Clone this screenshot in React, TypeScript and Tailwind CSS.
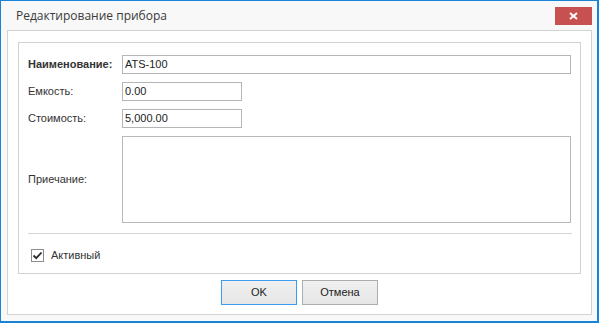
export default function App() {
  const label = "w-[94px] shrink-0 text-[11px] text-[#333]";
  const input =
    "h-[19px] border border-[#b5b5b5] bg-white px-[2px] flex items-center text-[11px] text-[#222]";

  return (
    <div
      className="w-[599px] h-[323px] bg-[#f8f8f8] border-l border-t border-r-2 border-b-2 border-[#1883d7] flex flex-col"
      style={{ fontFamily: "'Liberation Sans', Arial, sans-serif" }}
    >
      {/* Title bar */}
      <div className="h-[29px] shrink-0 flex items-start justify-between pl-[15px] pr-[5px]">
        <div
          className="pt-[6px] text-[12px] text-[#3a3a3a]"
          style={{ fontFamily: "'Open Sans', 'Noto Sans', sans-serif" }}
        >
          Редактирование прибора
        </div>
        <div className="mt-[6px] w-[37px] h-[18px] bg-[#c75050] flex items-center justify-center">
          <svg width="9" height="8" viewBox="0 0 9 8">
            <path d="M1 1 L8 7 M8 1 L1 7" stroke="#fff" strokeWidth="2" />
          </svg>
        </div>
      </div>

      {/* Content panel */}
      <div className="ml-[6px] mr-[5px] mb-[6px] flex-1 bg-white border border-[#d2d2d2] flex flex-col">
        <div className="mt-[11px] ml-[10px] w-[563px] h-[232px] border border-[#d2d2d2] pt-[12px] px-[9px] flex flex-col">
          <div className="flex items-center">
            <div className={label + " font-bold"}>Наименование:</div>
            <div className={input + " flex-1"}>ATS-100</div>
          </div>
          <div className="flex items-center mt-[8px]">
            <div className={label}>Емкость:</div>
            <div className={input + " w-[120px]"}>0.00</div>
          </div>
          <div className="flex items-center mt-[8px]">
            <div className={label}>Стоимость:</div>
            <div className={input + " w-[120px]"}>5,000.00</div>
          </div>
          <div className="flex items-center mt-[8px]">
            <div className={label}>Приечание:</div>
            <div className="flex-1 h-[87px] border border-[#b9b9b9] bg-white" />
          </div>
          <div className="mt-[10px] h-px bg-[#d4d4d4] mr-[-1px]" />
          <div className="mt-[13px] flex items-center pl-[3px]">
            <div className="w-[13px] h-[13px] border border-[#8c8c8c] bg-white flex items-center justify-center">
              <svg width="11" height="11" viewBox="0 0 11 11">
                <path d="M1.5 5.5 L4.2 8.2 L9.5 2.5" fill="none" stroke="#2b2b2b" strokeWidth="1.8" />
              </svg>
            </div>
            <div className="ml-[7px] text-[11px] text-[#333]">Активный</div>
          </div>
        </div>

        {/* Buttons */}
        <div className="mt-[6px] flex justify-center gap-[5px]">
          <button className="w-[76px] h-[25px] border border-[#3c9cf0] bg-gradient-to-b from-[#f0f0f0] to-[#e6e6e6] text-[11px] text-[#222]">
            OK
          </button>
          <button className="w-[76px] h-[25px] border border-[#adadad] bg-gradient-to-b from-[#f0f0f0] to-[#e6e6e6] text-[11px] text-[#222]">
            Отмена
          </button>
        </div>
      </div>
    </div>
  );
}
